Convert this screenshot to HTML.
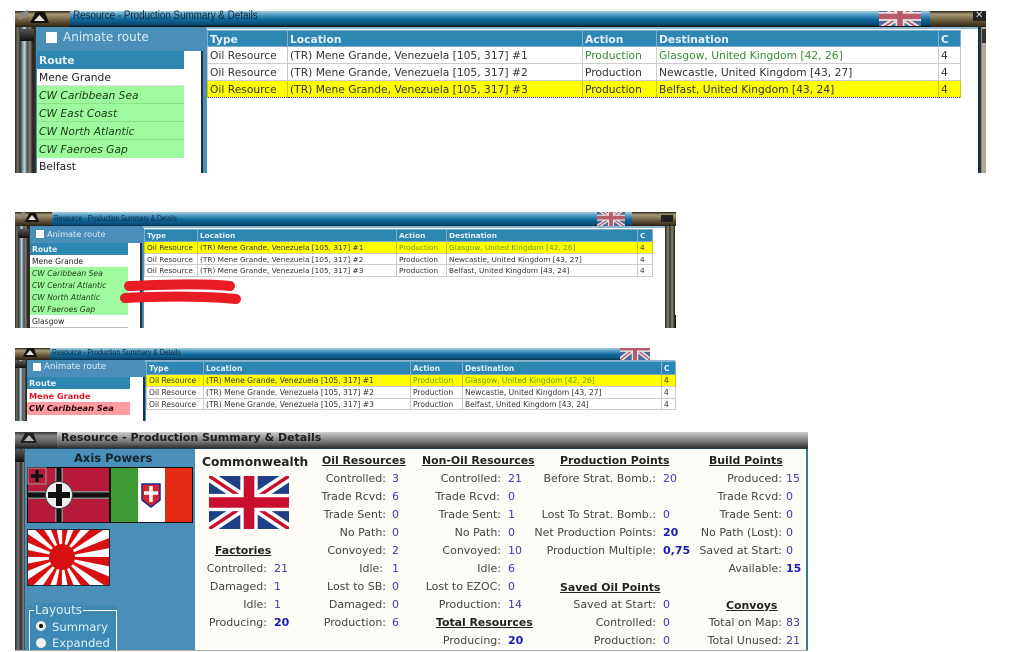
<!DOCTYPE html>
<html><head><meta charset="utf-8"><style>
html,body{margin:0;padding:0;background:#fff}
body{width:1009px;height:652px;position:relative;overflow:hidden;font-family:"DejaVu Sans","Liberation Sans",sans-serif;color:#333}
#w{position:absolute;left:0;top:0;width:1009px;height:652px;overflow:hidden;filter:blur(.3px)}
.a{position:absolute}
.t{position:absolute;white-space:nowrap}
.bar{position:absolute;background:linear-gradient(#a9d0e2 0,#4f9cc4 25%,#0f6a9c 55%,#0a4a72 90%,#062c44 100%)}
.cap{position:absolute;background:linear-gradient(#2a2418 0,#a89a78 20%,#6a5a3c 60%,#2a2214 100%)}
.rail{position:absolute;background:linear-gradient(90deg,#222 0,#7a7058 12%,#2c3a44 25%,#c8d8e0 45%,#3a4a54 60%,#8a8470 70%,#222 85%,#3a3a30 100%)}
.blue{position:absolute;background:#4a8fb7}
table{position:absolute;border-collapse:collapse;table-layout:fixed;background:#fff}
td,th{overflow:hidden;white-space:nowrap;padding:0 0 0 2px;text-align:left;border:1px solid #ccc}
.p1 td,.p1 th{padding-top:1px;padding-bottom:0}
th{background:#2e86b2;color:#e4f2f8;font-weight:bold;border-color:#7ab0cc}
.y td{background:#ff0;border-color:#c8c800;border-top:1px dotted #444;border-bottom:1px dotted #444}
.g{color:#3a8a3a}
.yg{color:#6a9a00}
.r{position:absolute;color:#222;white-space:nowrap;overflow:hidden;padding-left:2px;box-sizing:border-box}
.rh{background:#2e86b2;color:#e4f2f8;font-weight:bold}
.rg{background:#9dfb9d;font-style:italic;color:#1c3a1c}
.l{position:absolute;white-space:nowrap;font-size:11px;color:#444;line-height:14px;text-align:right;margin-top:1px}
.v{position:absolute;white-space:nowrap;font-size:11px;color:#3c3ca8;line-height:14px;margin-top:1px}
.b{font-weight:bold;color:#1a1ab4;font-size:11px}
.h{position:absolute;white-space:nowrap;font-size:10.9px;font-weight:bold;color:#222;text-decoration:underline;line-height:14px;margin-top:1px}
.title{position:absolute;font-family:"Liberation Sans",sans-serif;color:#10283a;white-space:nowrap;transform-origin:0 50%}
.btn{position:absolute;background:#111;clip-path:polygon(30% 0,78% 0,100% 100%,0 100%)}
.tri{position:absolute;background:#e8e4d8;clip-path:polygon(50% 0,100% 100%,0 100%)}
</style></head><body><div id="w">

<svg width="0" height="0" style="position:absolute"><defs>
<symbol id="uk" viewBox="0 0 60 40" preserveAspectRatio="none">
<rect width="60" height="40" fill="#1f3f86"/>
<path d="M0 0L60 40M60 0L0 40" stroke="#fff" stroke-width="8"/>
<path d="M0 0L60 40M60 0L0 40" stroke="#c8102e" stroke-width="2.6"/>
<path d="M30 0V40M0 20H60" stroke="#fff" stroke-width="13"/>
<path d="M30 0V40M0 20H60" stroke="#c8102e" stroke-width="8"/>
</symbol>
<symbol id="ukd" viewBox="0 0 60 40" preserveAspectRatio="none">
<rect width="60" height="40" fill="#4a6d98"/>
<path d="M0 0L60 40M60 0L0 40" stroke="#e8e4e4" stroke-width="8"/>
<path d="M0 0L60 40M60 0L0 40" stroke="#b85a6a" stroke-width="2.6"/>
<path d="M30 0V40M0 20H60" stroke="#e8e4e4" stroke-width="13"/>
<path d="M30 0V40M0 20H60" stroke="#b85a6a" stroke-width="8"/>
</symbol>
</defs></svg>

<!-- PANEL 1 -->
<div class="a" style="left:15px;top:27px;width:971px;height:146px;background:#fff"></div>
<div class="bar" style="left:70px;top:11px;width:860px;height:15px"></div>
<div class="a" style="left:70px;top:26px;width:860px;height:1px;background:#111"></div>
<svg class="a" style="left:879px;top:11px;width:42px;height:15px" viewBox="0 12 60 22" preserveAspectRatio="none"><use href="#ukd" width="60" height="40"/></svg>
<div class="cap" style="left:15px;top:11px;width:55px;height:16px"></div>
<div class="btn" style="left:30px;top:12px;width:19px;height:11px"></div>
<div class="tri" style="left:34px;top:15px;width:11px;height:6px"></div>
<div class="a" style="left:19px;top:12px;width:9px;height:6px;background:#8a8a82;transform:skewY(-25deg)"></div>
<div class="cap" style="left:930px;top:11px;width:56px;height:16px"></div>
<div class="a" style="left:973px;top:11px;width:13px;height:10px;background:#222"></div>
<div class="t" style="left:975px;top:10px;font-size:10px;color:#ddd;font-weight:bold">✕</div>
<div class="title" style="left:73px;top:10px;font-size:11.5px;transform:scaleX(.855)">Resource - Production Summary &amp; Details</div>
<div class="rail" style="left:15px;top:27px;width:21px;height:146px"></div>
<div class="a" style="left:20px;top:29px;width:14px;height:12px;background:linear-gradient(#555,#111)"></div>
<div class="blue" style="left:36px;top:27px;width:171px;height:146px"></div>
<div class="a" style="left:207px;top:27px;width:771px;height:146px;background:#fff"></div>
<div class="a" style="left:206px;top:27px;width:772px;height:2px;background:#8fb8d0"></div>
<div class="rail" style="left:978px;top:27px;width:8px;height:146px;background:linear-gradient(90deg,#1a2a34,#1c3a4e 35%,#b0a890 45%,#b0a890)"></div>
<div class="a" style="left:982px;top:29px;width:4px;height:14px;background:#3a3428"></div>
<div class="a" style="left:46px;top:32px;width:11px;height:11px;background:#fff"></div>
<div class="t" style="left:63px;top:30px;font-size:12px;color:#d8ecf6">Animate route</div>
<div class="a" style="left:37px;top:51px;width:164px;height:122px;background:#fff"></div>
<div class="a" style="left:201px;top:51px;width:2px;height:122px;background:#1c3040"></div>
<div class="r rh" style="left:37px;top:51px;width:147px;height:18px;font-size:10.7px;line-height:19px">Route</div>
<div class="r" style="left:37px;top:69px;width:147px;height:17px;font-size:10.7px;line-height:17px;border-bottom:1px solid #ddd">Mene Grande</div>
<div class="r rg" style="left:37px;top:86px;width:147px;height:18px;font-size:10.7px;line-height:19px;border-bottom:1px solid #8ce08c">CW Caribbean Sea</div>
<div class="r rg" style="left:37px;top:104px;width:147px;height:18px;font-size:10.7px;line-height:19px;border-bottom:1px solid #8ce08c">CW East Coast</div>
<div class="r rg" style="left:37px;top:122px;width:147px;height:18px;font-size:10.7px;line-height:19px;border-bottom:1px solid #8ce08c">CW North Atlantic</div>
<div class="r rg" style="left:37px;top:140px;width:147px;height:18px;font-size:10.7px;line-height:19px">CW Faeroes Gap</div>
<div class="r" style="left:37px;top:158px;width:147px;height:15px;font-size:10.7px;line-height:17px">Belfast</div>
<table class="p1" style="left:207px;top:30px;width:753px;font-size:10.7px;color:#333">
<colgroup><col style="width:80px"><col style="width:295px"><col style="width:74px"><col style="width:282px"><col style="width:22px"></colgroup>
<tr style="height:16px"><th>Type</th><th>Location</th><th>Action</th><th>Destination</th><th>C</th></tr>
<tr style="height:17px"><td>Oil Resource</td><td>(TR) Mene Grande, Venezuela [105, 317] #1</td><td class="g">Production</td><td class="g">Glasgow, United Kingdom [42, 26]</td><td>4</td></tr>
<tr style="height:17px"><td>Oil Resource</td><td>(TR) Mene Grande, Venezuela [105, 317] #2</td><td>Production</td><td>Newcastle, United Kingdom [43, 27]</td><td>4</td></tr>
<tr class="y" style="height:17px"><td>Oil Resource</td><td>(TR) Mene Grande, Venezuela [105, 317] #3</td><td>Production</td><td>Belfast, United Kingdom [43, 24]</td><td>4</td></tr>
</table>

<!-- PANEL 2 -->
<div class="bar" style="left:52px;top:212px;width:580px;height:14px"></div>
<svg class="a" style="left:597px;top:212px;width:28px;height:14px" viewBox="0 8 60 30" preserveAspectRatio="none"><use href="#ukd" width="60" height="40"/></svg>
<div class="cap" style="left:15px;top:212px;width:37px;height:14px"></div>
<div class="btn" style="left:25px;top:213px;width:14px;height:9px"></div>
<div class="tri" style="left:28px;top:215px;width:8px;height:5px"></div>
<div class="a" style="left:18px;top:213px;width:7px;height:5px;background:#8a8a82;transform:skewY(-25deg)"></div>
<div class="cap" style="left:632px;top:212px;width:44px;height:14px"></div>
<div class="a" style="left:661px;top:215px;width:12px;height:7px;background:#222"></div>
<div class="title" style="left:54px;top:213px;font-size:8.5px;transform:scaleX(.77)">Resource - Production Summary &amp; Details</div>
<div class="rail" style="left:15px;top:226px;width:15px;height:102px"></div>
<div class="a" style="left:18px;top:229px;width:11px;height:9px;background:linear-gradient(#555,#111)"></div>
<div class="blue" style="left:30px;top:226px;width:114px;height:102px"></div>
<div class="a" style="left:144px;top:226px;width:521px;height:102px;background:#fff"></div>
<div class="a" style="left:143px;top:226px;width:522px;height:2px;background:#8fb8d0"></div>
<div class="rail" style="left:665px;top:226px;width:10px;height:102px;background:linear-gradient(90deg,#222,#8a8470 30%,#333 50%,#8a8470 70%,#222)"></div>
<div class="a" style="left:675px;top:315px;width:1px;height:13px;background:#111"></div>
<div class="a" style="left:36px;top:230px;width:8px;height:8px;background:#fff"></div>
<div class="t" style="left:47px;top:229px;font-size:8.2px;color:#d8ecf6">Animate route</div>
<div class="a" style="left:30px;top:243px;width:110px;height:85px;background:#fff"></div>
<div class="a" style="left:140px;top:243px;width:2px;height:85px;background:#1c3040"></div>
<div class="r rh" style="left:30px;top:243px;width:98px;height:12px;font-size:7.6px;line-height:13px">Route</div>
<div class="r" style="left:30px;top:255px;width:98px;height:12px;font-size:7.6px;line-height:13px">Mene Grande</div>
<div class="r rg" style="left:30px;top:267px;width:98px;height:12px;font-size:7.6px;line-height:13px">CW Caribbean Sea</div>
<div class="r rg" style="left:30px;top:279px;width:98px;height:12px;font-size:7.6px;line-height:13px">CW Central Atlantic</div>
<div class="r rg" style="left:30px;top:291px;width:98px;height:12px;font-size:7.6px;line-height:13px">CW North Atlantic</div>
<div class="r rg" style="left:30px;top:303px;width:98px;height:12px;font-size:7.6px;line-height:13px">CW Faeroes Gap</div>
<div class="r" style="left:30px;top:315px;width:98px;height:13px;font-size:7.6px;line-height:14px;border-bottom:1px solid #bbb">Glasgow</div>
<table style="left:144px;top:229px;width:508px;font-size:7.35px;color:#333">
<colgroup><col style="width:53px"><col style="width:199px"><col style="width:50px"><col style="width:191px"><col style="width:15px"></colgroup>
<tr style="height:12px"><th>Type</th><th>Location</th><th>Action</th><th>Destination</th><th>C</th></tr>
<tr class="y" style="height:12px"><td style="border-top:0;border-bottom:0">Oil Resource</td><td style="border-top:0;border-bottom:0">(TR) Mene Grande, Venezuela [105, 317] #1</td><td class="yg" style="border-top:0;border-bottom:0">Production</td><td class="yg" style="border-top:0;border-bottom:0">Glasgow, United Kingdom [42, 26]</td><td style="border-top:0;border-bottom:0">4</td></tr>
<tr style="height:11px"><td>Oil Resource</td><td>(TR) Mene Grande, Venezuela [105, 317] #2</td><td>Production</td><td>Newcastle, United Kingdom [43, 27]</td><td>4</td></tr>
<tr style="height:12px"><td>Oil Resource</td><td>(TR) Mene Grande, Venezuela [105, 317] #3</td><td>Production</td><td>Belfast, United Kingdom [43, 24]</td><td>4</td></tr>
</table>
<svg class="a" style="left:116px;top:276px;width:130px;height:32px" viewBox="116 276 130 32"><path d="M129 286C160 285 200 283 230 286" stroke="#e81c24" stroke-width="10" stroke-linecap="round" fill="none"/><path d="M125 298C160 296 205 296 236 299" stroke="#e81c24" stroke-width="10" stroke-linecap="round" fill="none"/></svg>

<!-- PANEL 3 -->
<div class="bar" style="left:50px;top:348px;width:582px;height:12px"></div>
<svg class="a" style="left:620px;top:348px;width:30px;height:12px" viewBox="0 20 60 20" preserveAspectRatio="none"><use href="#ukd" width="60" height="40"/></svg>
<div class="cap" style="left:15px;top:348px;width:35px;height:12px"></div>
<div class="btn" style="left:23px;top:348px;width:14px;height:9px"></div>
<div class="tri" style="left:26px;top:350px;width:8px;height:5px"></div>
<div class="title" style="left:52px;top:347px;font-size:8.5px;transform:scaleX(.806)">Resource - Production Summary &amp; Details</div>
<div class="rail" style="left:15px;top:360px;width:13px;height:61px"></div>
<div class="a" style="left:15px;top:361px;width:11px;height:7px;background:linear-gradient(#555,#111)"></div>
<div class="blue" style="left:27px;top:360px;width:119px;height:61px"></div>
<div class="a" style="left:146px;top:360px;width:529px;height:61px;background:#fff"></div>
<div class="a" style="left:145px;top:360px;width:530px;height:2px;background:#8fb8d0"></div>
<div class="a" style="left:33px;top:363px;width:8px;height:8px;background:#fff"></div>
<div class="t" style="left:44px;top:362px;font-size:8.7px;color:#d8ecf6">Animate route</div>
<div class="a" style="left:27px;top:377px;width:116px;height:44px;background:#fff"></div>
<div class="a" style="left:143px;top:377px;width:2px;height:44px;background:#1c3040"></div>
<div class="r rh" style="left:27px;top:377px;width:103px;height:12px;font-size:8.2px;line-height:12px">Route</div>
<div class="r" style="left:27px;top:390px;width:103px;height:12px;font-size:8.2px;line-height:12px;font-weight:bold;color:#e01a2c">Mene Grande</div>
<div class="r" style="left:27px;top:402px;width:103px;height:13px;font-size:8.2px;line-height:12px;font-weight:bold;font-style:italic;background:#ff9ca0;color:#2a0a0a">CW Caribbean Sea</div>
<table style="left:146px;top:361px;width:529px;font-size:7.55px;color:#333">
<colgroup><col style="width:57px"><col style="width:207px"><col style="width:52px"><col style="width:199px"><col style="width:14px"></colgroup>
<tr style="height:13px"><th>Type</th><th>Location</th><th>Action</th><th>Destination</th><th>C</th></tr>
<tr class="y" style="height:12px"><td style="border-top:0;border-bottom:0">Oil Resource</td><td style="border-top:0;border-bottom:0">(TR) Mene Grande, Venezuela [105, 317] #1</td><td class="yg" style="border-top:0;border-bottom:0">Production</td><td class="yg" style="border-top:0;border-bottom:0">Glasgow, United Kingdom [42, 26]</td><td style="border-top:0;border-bottom:0">4</td></tr>
<tr style="height:12px"><td>Oil Resource</td><td>(TR) Mene Grande, Venezuela [105, 317] #2</td><td>Production</td><td>Newcastle, United Kingdom [43, 27]</td><td>4</td></tr>
<tr style="height:11px"><td>Oil Resource</td><td>(TR) Mene Grande, Venezuela [105, 317] #3</td><td>Production</td><td>Belfast, United Kingdom [43, 24]</td><td>4</td></tr>
</table>

<!-- PANEL 4 -->
<div class="a" style="left:15px;top:432px;width:793px;height:16px;background:linear-gradient(#d0d0d0 0,#a0a0a0 30%,#707070 65%,#303030 100%)"></div>
<div class="a" style="left:15px;top:432px;width:42px;height:16px;background:linear-gradient(#333,#888 25%,#555 70%,#222)"></div>
<div class="btn" style="left:20px;top:433px;width:17px;height:10px;background:#222"></div>
<div class="tri" style="left:24px;top:435px;width:10px;height:6px;background:#bbb"></div>
<div class="t" style="left:61px;top:431px;font-size:11px;font-weight:bold;color:#1e1e1e">Resource - Production Summary &amp; Details</div>
<div class="a" style="left:15px;top:448px;width:793px;height:1px;background:#1c3c50"></div>
<div class="rail" style="left:15px;top:449px;width:10px;height:201px;background:linear-gradient(90deg,#222,#777 30%,#2a2a2a 60%,#888 85%,#333)"></div>
<div class="a" style="left:15px;top:450px;width:9px;height:12px;background:linear-gradient(#555,#111)"></div>
<div class="blue" style="left:25px;top:449px;width:170px;height:201px"></div>
<div class="a" style="left:195px;top:449px;width:611px;height:201px;background:#fdfbf5"></div>
<div class="a" style="left:806px;top:449px;width:2px;height:201px;background:#2e7a9c"></div>
<div class="a" style="left:15px;top:650px;width:793px;height:1px;background:#aaa"></div>
<div class="t" style="left:74px;top:451px;font-size:11.5px;font-weight:bold;color:#16242e">Axis Powers</div>

<svg class="a" style="left:27px;top:467px;width:83px;height:56px" viewBox="0 0 83 56">
<rect x=".5" y=".5" width="82" height="55" fill="#b81a3c" stroke="#111"/>
<path d="M32 1V55M1 28H82" stroke="#8a8a8a" stroke-width="8"/><path d="M32 1V55M1 28H82" stroke="#111" stroke-width="5"/>
<rect x="1" y="1" width="18" height="16" fill="#b81a3c" stroke="#999" stroke-width="1"/>
<path d="M10 3V15M4 9H16" stroke="#111" stroke-width="3.5"/>
<circle cx="32" cy="28" r="13.5" fill="#eee" stroke="#444"/>
<path d="M32 17V39M21 28H43" stroke="#111" stroke-width="6"/>
</svg>
<svg class="a" style="left:110px;top:467px;width:83px;height:56px" viewBox="0 0 83 56">
<rect width="83" height="56" fill="#111"/>
<rect x="1" y="1" width="27" height="54" fill="#3d9a35"/><rect x="28" y="1" width="27" height="54" fill="#fff"/><rect x="55" y="1" width="27" height="54" fill="#e22a14"/>
<path d="M32 17H50V33L41 40L32 33Z" fill="#d8242c" stroke="#1a2a8c" stroke-width="1.5"/>
<path d="M41 19V35M34 26H48" stroke="#fff" stroke-width="3.5"/>
</svg>
<svg class="a" style="left:27px;top:529px;width:83px;height:57px" viewBox="0 0 83 57">
<rect width="83" height="57" fill="#fff"/>
<circle cx="35" cy="28" r="40" fill="none" stroke="#d80f10" stroke-width="80" stroke-dasharray="7.854"/>
<circle cx="35" cy="28" r="13" fill="#d80f10"/>
<rect x=".5" y=".5" width="82" height="56" fill="none" stroke="#1c2c3c"/>
</svg>
<svg class="a" style="left:209px;top:476px;width:80px;height:53px"><use href="#uk" width="80" height="53"/></svg>

<div class="a" style="left:27px;top:606px;width:90px;height:44px;background:#3c8ab4"></div>
<div class="a" style="left:29px;top:610px;width:88px;height:40px;border-top:1px solid #fff;border-left:1px solid #fff;border-right:1px solid #fff;box-sizing:border-box"></div>
<div class="t" style="left:34px;top:603px;font-size:12px;color:#e0f0f8;background:#3c8ab4;padding:0 1px">Layouts</div>
<div class="a" style="left:36px;top:621px;width:10px;height:10px;border-radius:50%;background:#f0f0f0"></div>
<div class="a" style="left:39px;top:624px;width:4px;height:4px;border-radius:50%;background:#111"></div>
<div class="t" style="left:52px;top:620px;font-size:11.6px;color:#e0f0f8">Summary</div>
<div class="a" style="left:36px;top:638px;width:10px;height:10px;border-radius:50%;background:#f0f0f0"></div>
<div class="t" style="left:52px;top:636px;font-size:11.6px;color:#e0f0f8">Expanded</div>

<div class="t" style="left:202px;top:455px;font-size:12.2px;font-weight:bold;color:#222">Commonwealth</div>
<div class="h" style="left:215px;top:543px">Factories</div>
<div class="l" style="right:742px;top:561px">Controlled:</div><div class="v" style="left:274px;top:561px">21</div>
<div class="l" style="right:742px;top:579px">Damaged:</div><div class="v" style="left:274px;top:579px">1</div>
<div class="l" style="right:742px;top:597px">Idle:</div><div class="v" style="left:274px;top:597px">1</div>
<div class="l" style="right:742px;top:615px">Producing:</div><div class="v b" style="left:274px;top:615px">20</div>

<div class="h" style="left:322px;top:453px">Oil Resources</div>
<div class="l" style="right:623px;top:471px">Controlled:</div><div class="v" style="left:392px;top:471px">3</div>
<div class="l" style="right:623px;top:489px">Trade Rcvd:</div><div class="v" style="left:392px;top:489px">6</div>
<div class="l" style="right:623px;top:507px">Trade Sent:</div><div class="v" style="left:392px;top:507px">0</div>
<div class="l" style="right:623px;top:525px">No Path:</div><div class="v" style="left:392px;top:525px">0</div>
<div class="l" style="right:623px;top:543px">Convoyed:</div><div class="v" style="left:392px;top:543px">2</div>
<div class="l" style="right:626px;top:561px">Idle:</div><div class="v" style="left:392px;top:561px">1</div>
<div class="l" style="right:623px;top:579px">Lost to SB:</div><div class="v" style="left:392px;top:579px">0</div>
<div class="l" style="right:623px;top:597px">Damaged:</div><div class="v" style="left:392px;top:597px">0</div>
<div class="l" style="right:623px;top:615px">Production:</div><div class="v" style="left:392px;top:615px">6</div>

<div class="h" style="left:422px;top:453px">Non-Oil Resources</div>
<div class="l" style="right:508px;top:471px">Controlled:</div><div class="v" style="left:508px;top:471px">21</div>
<div class="l" style="right:509px;top:489px">Trade Rcvd:</div><div class="v" style="left:508px;top:489px">0</div>
<div class="l" style="right:508px;top:507px">Trade Sent:</div><div class="v" style="left:508px;top:507px">1</div>
<div class="l" style="right:508px;top:525px">No Path:</div><div class="v" style="left:508px;top:525px">0</div>
<div class="l" style="right:508px;top:543px">Convoyed:</div><div class="v" style="left:508px;top:543px">10</div>
<div class="l" style="right:508px;top:561px">Idle:</div><div class="v" style="left:508px;top:561px">6</div>
<div class="l" style="right:508px;top:579px">Lost to EZOC:</div><div class="v" style="left:508px;top:579px">0</div>
<div class="l" style="right:508px;top:597px">Production:</div><div class="v" style="left:508px;top:597px">14</div>
<div class="h" style="left:436px;top:615px">Total Resources</div>
<div class="l" style="right:508px;top:633px">Producing:</div><div class="v b" style="left:508px;top:633px">20</div>

<div class="h" style="left:560px;top:453px">Production Points</div>
<div class="l" style="right:353px;top:471px">Before Strat. Bomb.:</div><div class="v" style="left:663px;top:471px">20</div>
<div class="l" style="right:353px;top:507px">Lost To Strat. Bomb.:</div><div class="v" style="left:663px;top:507px">0</div>
<div class="l" style="right:353px;top:525px">Net Production Points:</div><div class="v b" style="left:663px;top:525px">20</div>
<div class="l" style="right:353px;top:543px">Production Multiple:</div><div class="v b" style="left:663px;top:543px">0,75</div>
<div class="h" style="left:560px;top:580px">Saved Oil Points</div>
<div class="l" style="right:353px;top:597px">Saved at Start:</div><div class="v" style="left:663px;top:597px">0</div>
<div class="l" style="right:353px;top:615px">Controlled:</div><div class="v" style="left:663px;top:615px">0</div>
<div class="l" style="right:353px;top:633px">Production:</div><div class="v" style="left:663px;top:633px">0</div>

<div class="h" style="left:709px;top:453px">Build Points</div>
<div class="l" style="right:227px;top:471px">Produced:</div><div class="v" style="left:786px;top:471px">15</div>
<div class="l" style="right:227px;top:489px">Trade Rcvd:</div><div class="v" style="left:786px;top:489px">0</div>
<div class="l" style="right:227px;top:507px">Trade Sent:</div><div class="v" style="left:786px;top:507px">0</div>
<div class="l" style="right:227px;top:525px">No Path (Lost):</div><div class="v" style="left:786px;top:525px">0</div>
<div class="l" style="right:227px;top:543px">Saved at Start:</div><div class="v" style="left:786px;top:543px">0</div>
<div class="l" style="right:227px;top:561px">Available:</div><div class="v b" style="left:786px;top:561px">15</div>
<div class="h" style="left:726px;top:598px">Convoys</div>
<div class="l" style="right:227px;top:615px">Total on Map:</div><div class="v" style="left:786px;top:615px">83</div>
<div class="l" style="right:227px;top:633px">Total Unused:</div><div class="v" style="left:786px;top:633px">21</div>

</div></body></html>
